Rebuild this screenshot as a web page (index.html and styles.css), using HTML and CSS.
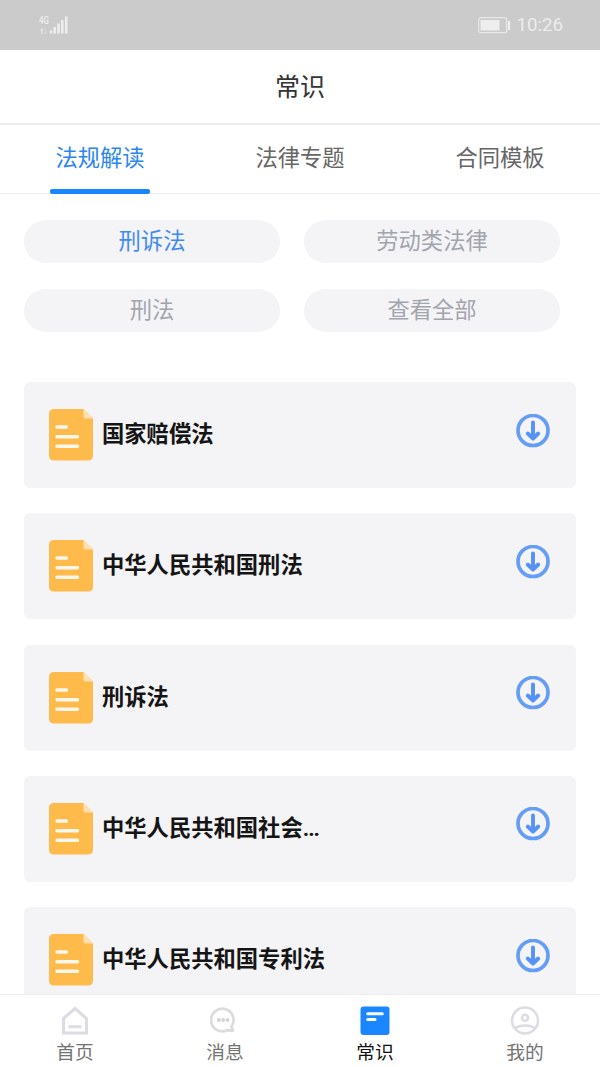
FILE: index.html
```html
<!DOCTYPE html>
<html lang="zh-CN">
<head>
<meta charset="utf-8">
<title>常识</title>
<link rel="stylesheet" href="styles.css">
</head>
<body>
<svg class="defs" aria-hidden="true">
  <symbol id="doc" viewBox="0 0 44 52">
    <path d="M5 0H34.500L44 9.500V46.500Q44 51.500 39 51.500H5Q0 51.500 0 46.500V5Q0 0 5 0Z" fill="#ffba4c"/>
    <path d="M34.500 0L44 9.500H36.500Q34.500 9.500 34.500 7.500Z" fill="#ffe0ae"/>
  </symbol>
  <symbol id="down" viewBox="0 0 34 34">
    <circle cx="17" cy="16.500" r="15" fill="none" stroke="#659df5" stroke-width="3.700"/>
    <path d="M17 8.500V24M11.800 19.500L17 24.500L22.200 19.500" fill="none" stroke="#5592f6" stroke-width="3.900" stroke-linecap="round" stroke-linejoin="round"/>
  </symbol>
  <symbol id="file" viewBox="0 0 44 52">
    <use href="#doc" width="44" height="52"/>
    <path d="M8 18H17.500M8 27.700H28.500M8 37.300H28.500" stroke="#fff8ea" stroke-width="3.400" stroke-linecap="round"/>
  </symbol>
</svg>
<div class="app">
  <div class="status">
    <div class="network">
      <div class="net-type"><span>4G</span>
        <svg width="9" height="7" viewBox="0 0 9 7"><path d="M0 2.500L2.500 0V6H1.500V2.500Z" fill="#f0f0f0"/><path d="M5 0V6L7 3.500" fill="none" stroke="#dadada"/></svg>
      </div>
      <svg class="signal" width="19" height="18" viewBox="0 0 19 18"><path d="M2 14.500V17.500M5.700 11V17.500M9.500 7.500V17.500M13.300 4V17.500M17.200 .5V17.500" stroke="#ededed" stroke-width="2.600"/></svg>
    </div>
    <div class="power">
      <svg width="33" height="17" viewBox="0 0 33 17"><rect x=".7" y=".7" width="28" height="15" rx="2" fill="none" stroke="#e8e8e8" stroke-width="1.200"/><rect x="2.500" y="3" width="19" height="10.500" fill="#eee"/><path d="M31 4V13" stroke="#eee" stroke-width="2.200"/></svg>
      <span>10:26</span>
    </div>
  </div>
  <header class="header">常识</header>
  <nav class="tabs">
    <div class="tab active">法规解读</div>
    <div class="tab">法律专题</div>
    <div class="tab">合同模板</div>
  </nav>
  <main class="content">
    <div class="tags">
      <div class="tag active">刑诉法</div>
      <div class="tag">劳动类法律</div>
      <div class="tag">刑法</div>
      <div class="tag">查看全部</div>
    </div>
    <div class="list">
      <div class="card"><svg class="doc"><use href="#file"/></svg><span class="name">国家赔偿法</span><svg class="down"><use href="#down"/></svg></div>
      <div class="card"><svg class="doc"><use href="#file"/></svg><span class="name">中华人民共和国刑法</span><svg class="down"><use href="#down"/></svg></div>
      <div class="card"><svg class="doc"><use href="#file"/></svg><span class="name">刑诉法</span><svg class="down"><use href="#down"/></svg></div>
      <div class="card"><svg class="doc"><use href="#file"/></svg><span class="name">中华人民共和国社会<span class="dots">...</span></span><svg class="down"><use href="#down"/></svg></div>
      <div class="card"><svg class="doc"><use href="#file"/></svg><span class="name">中华人民共和国专利法</span><svg class="down"><use href="#down"/></svg></div>
    </div>
  </main>
  <footer class="tabbar">
    <div class="item">
      <svg width="30" height="30" viewBox="0 0 30 30"><path d="M3.500 12.500L15 2.500L26.500 12.500V27H3.500Z" fill="none" stroke="#dcdce4" stroke-width="3"/><path d="M8.500 20.700H21.500" stroke="#dcdce4" stroke-width="3"/></svg>
      <span>首页</span>
    </div>
    <div class="item">
      <svg width="30" height="30" viewBox="0 0 30 30"><path d="M21.500 21.500A11.300 11.300 0 1 0 18 24.200Q20 24.200 24.500 24.800Q22.700 23.500 22.300 20.500" transform="translate(-.7 0)" fill="none" stroke="#dcdcdc" stroke-width="2.700"/><g fill="#d2d2d2"><circle cx="8.900" cy="14" r="1.900"/><circle cx="13.200" cy="14" r="1.900"/><circle cx="17.500" cy="14" r="1.900"/></g></svg>
      <span>消息</span>
    </div>
    <div class="item active">
      <svg width="30" height="30" viewBox="0 0 30 30"><rect x=".5" y=".5" width="29" height="28.500" rx="3" fill="#1a86ff"/><path d="M7.700 7.700H22.300M7.700 13.500H15" stroke="#fff" stroke-width="3" stroke-linecap="round"/></svg>
      <span>常识</span>
    </div>
    <div class="item">
      <svg width="30" height="30" viewBox="0 0 30 30"><g fill="none" stroke="#dcdce4" stroke-width="2.600"><circle cx="15" cy="14.500" r="13"/><circle cx="15" cy="11.800" r="3"/><path d="M5 22.500Q8.500 19.500 15 19.500T25 22.500"/></g></svg>
      <span>我的</span>
    </div>
  </footer>
</div>
</body>
</html>
```
FILE: styles.css
```css
* { box-sizing: border-box; }
body { margin: 0; background: #fff; font-family: Roboto, "Noto Sans CJK SC", sans-serif; }
.defs { display: none; }
.app { display: flex; flex-direction: column; height: 1067px; overflow: hidden; }
.status { flex: none; display: flex; justify-content: space-between; height: 50px; padding: 0 37px 0 39px; background: #cbcbcb; color: #ededed; }
.network { display: flex; align-items: flex-start; padding-top: 16px; }
.net-type { display: flex; flex-direction: column; width: 10px; font-size: 9px; line-height: 10px; font-weight: 500; }
.net-type span { transform: scale(.88, 1.15); transform-origin: left center; }
.net-type svg { margin: 2px 0 0 1px; }
.power { display: flex; align-items: center; gap: 5px; font-size: 18.700px; }
.header { flex: none; height: 75px; border-bottom: 2px solid #ebebeb; text-align: center; font-size: 25px; line-height: 75px; color: #333; }
.tabs { flex: none; display: flex; height: 69px; border-bottom: 1px solid #ededed; }
.tab { flex: 1; display: flex; flex-direction: column; align-items: center; height: 69px; padding-top: 1px; font-size: 22.300px; line-height: 64px; color: #666; }
.tab.active { color: #2b85f0; }
.tab.active::after { content: ""; width: 100px; height: 5px; margin-top: -1px; border-radius: 2px; background: #1a86ff; }
.content { flex: 1; min-height: 0; overflow: hidden; padding: 25.500px 24px 0; }
.tags { display: grid; grid-template-columns: 256px 256px; gap: 25.500px 24px; }
.tag { height: 43.500px; border-radius: 22px; background: #f4f4f6; text-align: center; font-size: 22.300px; line-height: 43px; color: #a2a4ae; }
.tag.active { color: #408af5; }
.list { display: flex; flex-direction: column; gap: 25.250px; padding-top: 50px; }
.card { flex: none; display: flex; align-items: center; height: 106px; padding: 0 26px 0 25px; border-radius: 6px; background: #f4f4f6; }
.doc { width: 44px; height: 52px; }
.name { flex: 1; padding: 0 0 6px 9px; font-size: 22.300px; font-weight: 700; color: #151515; }
.dots { letter-spacing: -1px; }
.down { width: 34px; height: 34px; margin-bottom: 9px; }
.tabbar { flex: none; display: flex; height: 73px; border-top: 1px solid #eee; background: #fff; }
.item { flex: 1; display: flex; flex-direction: column; align-items: center; padding-top: 11px; font-size: 18.700px; line-height: 31px; color: #737373; }
.item span { padding-top: 2px; }
.item svg { flex: none; }
.item.active { color: #111; }
```
